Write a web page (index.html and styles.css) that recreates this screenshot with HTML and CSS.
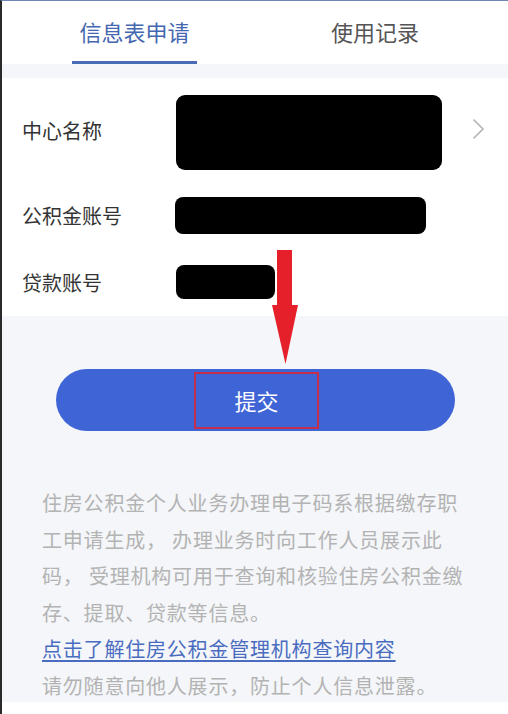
FILE: index.html
```html
<!DOCTYPE html>
<html lang="zh-CN">
<head>
<meta charset="utf-8">
<title>信息表申请</title>
<link rel="stylesheet" href="styles.css">
</head>
<body>
<div class="page">
  <nav class="tabs">
    <div class="tab active">信息表申请</div>
    <div class="tab">使用记录</div>
  </nav>
  <div class="band"></div>
  <section class="form">
    <div class="row r1">
      <span class="label">中心名称</span>
      <span class="mask m1"></span>
      <svg class="chev" width="13" height="22" viewBox="0 0 13 22"><polyline points="1.5,1.5 11,11 1.5,20.5" fill="none" stroke="#b4b4b4" stroke-width="1.6"/></svg>
    </div>
    <div class="row r2">
      <span class="label">公积金账号</span>
      <span class="mask m2"></span>
    </div>
    <div class="row r3">
      <span class="label">贷款账号</span>
      <span class="mask m3"></span>
    </div>
  </section>
  <section class="foot">
    <button class="submit"><span class="mark">提交</span></button>
    <div class="text">
      <p class="note">住房公积金个人业务办理电子码系根据缴存职工申请生成， 办理业务时向工作人员展示此码， 受理机构可用于查询和核验住房公积金缴存、提取、贷款等信息。</p>
      <a class="link" href="#">点击了解住房公积金管理机构查询内容</a>
      <p class="note">请勿随意向他人展示，防止个人信息泄露。</p>
    </div>
  </section>
  <svg class="arrow" width="26" height="115" viewBox="0 0 26 115">
    <rect x="5" y="0" width="15" height="57" fill="#e5202a"/>
    <polygon points="0,55 26,55 13.5,114" fill="#e5202a"/>
  </svg>
</div>
</body>
</html>
```
FILE: styles.css
```css
* { box-sizing: border-box; }
html, body { margin: 0; padding: 0; background: #fff; }
body {
  font-family: "Noto Sans CJK SC", "Noto Sans", sans-serif;
}
.page {
  position: relative;
  width: 508px;
  height: 714px;
  border-left: 2px solid #2a2a2a;
  border-top: 1px solid #6d86b5;
  background: #fff;
  overflow: hidden;
}
.tabs {
  display: flex;
  height: 63px;
  padding-left: 70px;
  gap: 134px;
}
.tab {
  height: 63px;
  display: flex;
  align-items: center;
  justify-content: center;
  font-size: 22px;
  color: #555;
  border-bottom: 3px solid transparent;
}
.tab.active {
  width: 125px;
  color: #4467b0;
  border-bottom-color: #4a6cb4;
}
.band {
  height: 14px;
  background: #f4f6f9;
}
.form {
  padding: 17px 0 17px 20px;
}
.row {
  display: flex;
  align-items: center;
}
.r2 { margin-top: 27px; }
.r3 { margin-top: 31px; }
.label {
  width: 154px;
  font-size: 20px;
  color: #333;
  flex: none;
}
.r1 .label { margin-top: -5px; }
.r2 .label { width: 153px; }
.mask {
  display: block;
  background: #000;
  border-radius: 8px;
}
.m1 { width: 266px; height: 75px; border-radius: 9px; }
.m2 { width: 251px; height: 37px; }
.m3 { width: 99px; height: 34px; }
.chev {
  margin-left: 30px;
  margin-top: -7px;
}
.foot {
  background: #f4f6f9;
  height: 386px;
  padding-top: 53px;
}
.submit {
  display: flex;
  align-items: center;
  justify-content: center;
  width: 399px;
  height: 62px;
  margin: 0 auto;
  border: none;
  border-radius: 31px;
  background: #3e64d5;
  font-family: inherit;
  font-size: 22px;
  color: #fff;
  padding: 0;
}
.mark {
  display: inline-block;
  border: 2px solid #c4304b;
  line-height: 26px;
  padding: 13.5px 38px;
  margin-left: 3px;
}
.text {
  margin-top: 54px;
  padding: 0 36px 0 40px;
  font-size: 20px;
  letter-spacing: 0.8px;
  line-height: 36.5px;
}
.note {
  margin: 0;
  color: #b3b3b3;
}
.link {
  display: block;
  color: #4a6cc0;
  text-decoration: underline;
  text-underline-offset: 3px;
}
.arrow {
  position: absolute;
  left: 270px;
  top: 249px;
}
```
